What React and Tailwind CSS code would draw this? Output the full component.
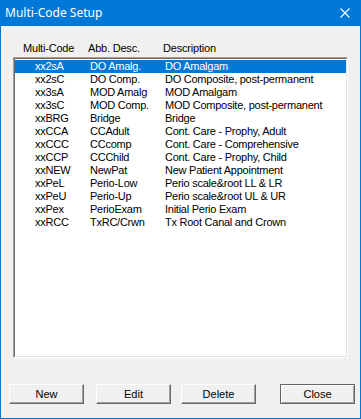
import React from "react";

const rows = [
  ["xx2sA", "DO Amalg.", "DO Amalgam"],
  ["xx2sC", "DO Comp.", "DO Composite, post-permanent"],
  ["xx3sA", "MOD Amalg", "MOD Amalgam"],
  ["xx3sC", "MOD Comp.", "MOD Composite, post-permanent"],
  ["xxBRG", "Bridge", "Bridge"],
  ["xxCCA", "CCAdult", "Cont. Care - Prophy, Adult"],
  ["xxCCC", "CCcomp", "Cont. Care - Comprehensive"],
  ["xxCCP", "CCChild", "Cont. Care - Prophy, Child"],
  ["xxNEW", "NewPat", "New Patient Appointment"],
  ["xxPeL", "Perio-Low", "Perio scale&root LL & LR"],
  ["xxPeU", "Perio-Up", "Perio scale&root UL & UR"],
  ["xxPex", "PerioExam", "Initial Perio Exam"],
  ["xxRCC", "TxRC/Crwn", "Tx Root Canal and Crown"],
];

function Btn({ label, def }) {
  return (
    <div
      className={
        "h-[20px] w-[75px] flex items-center justify-center text-[11px] text-black bg-[#f0f0f0] " +
        (def
          ? "border border-[#646464] shadow-[inset_1px_1px_0_#ffffff,inset_-1px_-1px_0_#a0a0a0]"
          : "border-t border-l border-t-white border-l-white border-b border-r border-b-[#696969] border-r-[#696969] shadow-[inset_-1px_-1px_0_#a0a0a0]")
      }
    >
      {label}
    </div>
  );
}

export default function App() {
  return (
    <div
      className="w-[361px] h-[419px] flex flex-col bg-[#f0f0f0]"
      style={{ fontFamily: '"Liberation Sans", Arial, sans-serif' }}
    >
      <div className="h-[26px] bg-[#0078d7] flex items-center justify-between pl-[5px] pr-[11px]">
        <span
          className="text-white text-[12px] leading-none"
          style={{ fontFamily: '"Noto Sans", "Open Sans", sans-serif' }}
        >
          Multi-Code Setup
        </span>
        <svg width="10" height="10" viewBox="0 0 10 10" className="block">
          <path d="M0.5 0.5 L9.5 9.5 M9.5 0.5 L0.5 9.5" stroke="#ffffff" strokeWidth="1.1" />
        </svg>
      </div>
      <div className="flex-1 flex flex-col border-l border-r border-b border-[#0078d7]">
        <div className="mt-[16px] h-[13px] relative text-[11px] leading-[13px] text-black tracking-[-0.2px]">
          <span className="absolute left-[22px]">Multi-Code</span>
          <span className="absolute left-[87px]">Abb. Desc.</span>
          <span className="absolute left-[162px]">Description</span>
        </div>
        <div className="mt-[2px] ml-[12px] w-[335px] h-[301px] border-t border-l border-t-[#a0a0a0] border-l-[#a0a0a0] border-b border-r border-b-white border-r-white">
          <div className="w-full h-full bg-white border-t border-l border-t-[#696969] border-l-[#696969] border-b border-r border-b-[#e3e3e3] border-r-[#e3e3e3] pt-[1px]">
            {rows.map((r, i) => (
              <div
                key={i}
                className={
                  "h-[13px] flex text-[11px] leading-[13px] tracking-[-0.25px] " +
                  (i === 0 ? "bg-[#0078d7] text-white" : "text-black")
                }
              >
                <span className="w-[75px] pl-[20px] shrink-0">{r[0]}</span>
                <span className="w-[75px] shrink-0">{r[1]}</span>
                <span className="whitespace-nowrap">{r[2]}</span>
              </div>
            ))}
          </div>
        </div>
        <div className="mt-[26px] flex pl-[8px]">
          <Btn label="New" />
          <div className="w-[12px]" />
          <Btn label="Edit" />
          <div className="w-[10px]" />
          <Btn label="Delete" />
          <div className="w-[24px]" />
          <Btn label="Close" def />
        </div>
      </div>
    </div>
  );
}
